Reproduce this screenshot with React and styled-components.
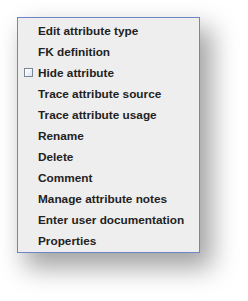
import React from "react";
import styled, { createGlobalStyle } from "styled-components";

const Global = createGlobalStyle`
  html, body { margin: 0; padding: 0; background: #ffffff; }
  body { font-family: "Liberation Sans", Arial, sans-serif; }
`;

const Page = styled.div`
  width: 248px;
  height: 301px;
  padding: 17px 0 0 17px;
  box-sizing: border-box;
`;

const Menu = styled.ul`
  list-style: none;
  margin: 0;
  width: 183px;
  box-sizing: border-box;
  padding: 2px 0 1px;
  background: #eeeeee;
  border: 1px solid #6a86c6;
  box-shadow: 10px 13px 24px 2px rgba(0, 0, 0, 0.36);
  display: flex;
  flex-direction: column;
`;

const Row = styled.li`
  height: 21px;
  display: flex;
  align-items: center;
  gap: 5px;
  padding-left: 6px;
  font-size: 11.8px;
  font-weight: 700;
  color: #222222;
  white-space: nowrap;
  cursor: default;
`;

const IconSlot = styled.span`
  width: 9px;
  height: 9px;
  flex: none;
  display: flex;
`;

const Check = styled.span`
  width: 9px;
  height: 9px;
  box-sizing: border-box;
  border: 1px solid #7a8799;
  background: linear-gradient(135deg, #ffffff 0%, #dfe5ee 100%);
  box-shadow: inset 1px 1px 0 #ffffff;
`;

const items = [
  { label: "Edit attribute type" },
  { label: "FK definition" },
  { label: "Hide attribute", check: true },
  { label: "Trace attribute source" },
  { label: "Trace attribute usage" },
  { label: "Rename" },
  { label: "Delete" },
  { label: "Comment" },
  { label: "Manage attribute notes" },
  { label: "Enter user documentation" },
  { label: "Properties" },
];

export default function App() {
  return (
    <>
      <Global />
      <Page>
        <Menu>
          {items.map((it) => (
            <Row key={it.label}>
              <IconSlot>{it.check && <Check />}</IconSlot>
              {it.label}
            </Row>
          ))}
        </Menu>
      </Page>
    </>
  );
}
